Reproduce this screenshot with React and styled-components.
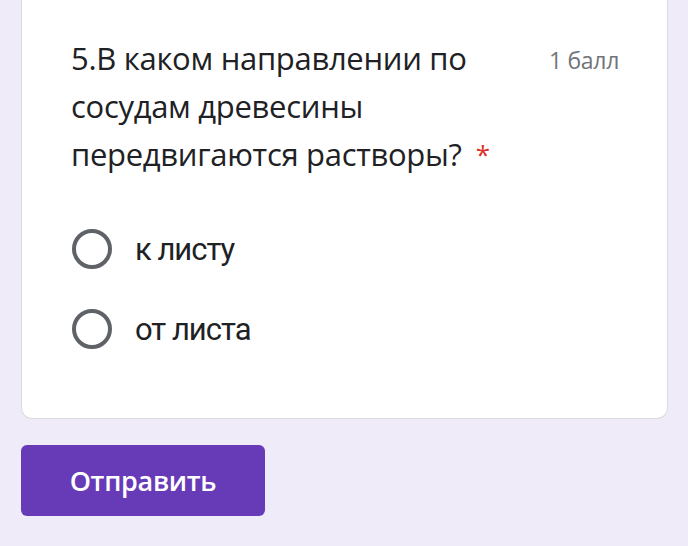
import React from 'react';
import styled, { createGlobalStyle } from 'styled-components';

const GlobalStyle = createGlobalStyle`
  html, body {
    margin: 0;
    padding: 0;
    background: #f0ebf8;
  }
  body {
    width: 688px;
    height: 546px;
    overflow: hidden;
  }
`;

const options = ['к листу', 'от листа'];

const App = () => (
  <Page>
    <GlobalStyle />
    <Card>
      <Header>
        <Title>
          5.В каком направлении по сосудам древесины передвигаются растворы?
          <Required>*</Required>
        </Title>
        <Points>1 балл</Points>
      </Header>
      <Options>
        {options.map((o) => (
          <Option key={o}>
            <Radio />
            <OptionText>{o}</OptionText>
          </Option>
        ))}
      </Options>
    </Card>
    <Submit type="button">Отправить</Submit>
  </Page>
);

export default App;

const Page = styled.div`
  padding: 0 20px 0 21px;
  display: flex;
  flex-direction: column;
  align-items: flex-start;
`;

const Card = styled.div`
  box-sizing: border-box;
  width: 647px;
  background: #fff;
  border: 1.5px solid #dadce0;
  border-top: none;
  border-radius: 0 0 11px 11px;
  padding: 34px 48px 69px 49px;
`;

const Header = styled.div`
  display: flex;
  justify-content: space-between;
  align-items: flex-start;
`;

const Title = styled.div`
  width: 440px;
  font-family: "Open Sans", Roboto, sans-serif;
  font-size: 31px;
  line-height: 48px;
  letter-spacing: -0.3px;
  color: #202124;
`;

const Required = styled.span`
  color: #d93025;
  margin-left: 14px;
  font-size: 26px;
  vertical-align: 2px;
`;

const Points = styled.div`
  font-family: "Open Sans", Roboto, sans-serif;
  font-size: 23px;
  line-height: 30px;
  margin-top: 11px;
  letter-spacing: -0.3px;
  color: #70757a;
`;

const Options = styled.div`
  margin-top: 51px;
  display: flex;
  flex-direction: column;
  gap: 40px;
`;

const Option = styled.div`
  display: flex;
  align-items: center;
  height: 40px;
`;

const Radio = styled.span`
  box-sizing: border-box;
  width: 40px;
  height: 40px;
  border: 4px solid #5f6368;
  border-radius: 50%;
  margin-left: 1px;
  flex-shrink: 0;
`;

const OptionText = styled.span`
  margin-left: 23px;
  font-family: Roboto, "Liberation Sans", sans-serif;
  font-size: 31px;
  letter-spacing: -1px;
  color: #202124;
`;

const Submit = styled.button`
  margin-top: 26px;
  width: 244px;
  height: 71px;
  border: none;
  border-radius: 6px;
  background: #673ab7;
  color: #fff;
  font-family: "Open Sans", Roboto, sans-serif;
  font-weight: 600;
  font-size: 27px;
  letter-spacing: -0.3px;
  cursor: pointer;
`;
